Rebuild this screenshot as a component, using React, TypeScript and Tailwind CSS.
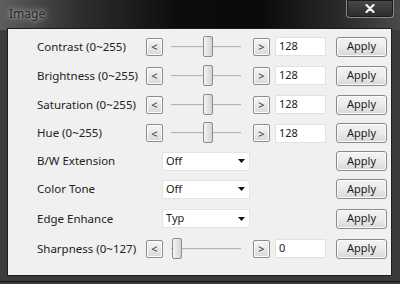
import React from "react";

const font = { fontFamily: '"Noto Sans", "DejaVu Sans", sans-serif' };

function SmallBtn({ ch }: { ch: string }) {
  return (
    <div className="w-[17px] h-[18px] border border-[#8c8c8c] rounded-[2px] bg-gradient-to-b from-[#f6f6f6] to-[#d9d9d9] flex items-center justify-center text-[11px] leading-none text-[#333] shadow-[inset_0_0_0_1px_#fcfcfc]">
      {ch}
    </div>
  );
}

function ApplyBtn() {
  return (
    <div className="w-[51px] h-[20px] border border-[#8a8a8a] rounded-[3px] bg-gradient-to-b from-[#f3f3f3] via-[#ebebeb] to-[#d6d6d6] flex items-center justify-center text-[11px] text-[#1a1a1a] shadow-[inset_0_0_0_1px_#fbfbfb]">
      Apply
    </div>
  );
}

function SliderRow({ label, value, max, h }: { label: string; value: number; max: number; h: number }) {
  const left = 9 + (value / max) * 61;
  return (
    <div className="flex items-center" style={{ height: h }}>
      <div className="w-[109px] text-[11.5px] text-[#222] whitespace-nowrap">{label}</div>
      <SmallBtn ch="<" />
      <div className="relative w-[90px] h-[22px]">
        <div className="absolute left-[8px] right-[12px] top-[10px] h-[2px] border-t border-[#b5b5b5] bg-[#e6e6e6]" />
        <div
          className="absolute top-[0px] w-[10px] h-[21px] border border-[#8c8c8c] rounded-[2px] bg-gradient-to-r from-[#f4f4f4] via-[#e3e3e3] to-[#d2d2d2]"
          style={{ left }}
        />
      </div>
      <SmallBtn ch=">" />
      <div className="ml-[5px] w-[51px] h-[19px] bg-white border border-[#e2e2e2] flex items-center pl-[3px] text-[11px] text-[#222]">
        {value}
      </div>
      <div className="ml-[10px]">
        <ApplyBtn />
      </div>
    </div>
  );
}

function SelectRow({ label, value, h }: { label: string; value: string; h: number }) {
  return (
    <div className="flex items-center" style={{ height: h }}>
      <div className="w-[109px] text-[11.5px] text-[#222] whitespace-nowrap">{label}</div>
      <div className="ml-[16px] w-[88px] h-[19px] bg-white border border-[#e4e4e4] flex items-center justify-between pl-[3px] pr-[4px] text-[11px] text-[#222]">
        <span>{value}</span>
        <svg width="7" height="4" viewBox="0 0 7 4">
          <path d="M0 0 H7 L3.5 4 Z" fill="#111" />
        </svg>
      </div>
      <div className="ml-[86px]">
        <ApplyBtn />
      </div>
    </div>
  );
}

export default function App() {
  return (
    <div
      className="w-[400px] h-[284px] relative overflow-hidden flex flex-col bg-[#3b3b3b]"
      style={font}
    >
      <div className="absolute inset-x-0 top-0 h-[30px] bg-[linear-gradient(90deg,#5e5e5e_0%,#2e2e2e_20%,#0c0c0c_45%,#0a0a0a_65%,#2a2a2a_85%,#4a4a4a_100%)]" />
      <div className="relative h-[28px] flex items-center pl-[9px]">
        <span className="text-[12px] text-[#262626] [text-shadow:0_0_3px_#a0a0a0,0_0_6px_#a0a0a0,0_0_10px_#8a8a8a]">Image</span>
        <div className="absolute right-[6px] top-0 w-[48px] h-[18px] rounded-b-[4px] border border-t-0 border-[#8a8a8a] bg-gradient-to-b from-[#4a4a4a] to-[#2c2c2c] flex items-center justify-center shadow-[inset_0_0_0_1px_#1a1a1a]">
          <svg width="10" height="9" viewBox="0 0 10 9">
            <path d="M1.5 1 L8.5 8 M8.5 1 L1.5 8" stroke="#f4f4f4" strokeWidth="2.2" strokeLinecap="round" />
          </svg>
        </div>
      </div>
      <div className="relative ml-[7px] w-[385px] h-[248px] border border-[#1c1c1c] bg-[#f0f0f0] pl-[29px] pt-[3px] flex flex-col">
        <SliderRow label="Contrast (0~255)" value={128} max={255} h={29} />
        <SliderRow label="Brightness (0~255)" value={128} max={255} h={29} />
        <SliderRow label="Saturation (0~255)" value={128} max={255} h={29} />
        <SliderRow label="Hue (0~255)" value={128} max={255} h={28} />
        <SelectRow label="B/W Extension" value="Off" h={28} />
        <SelectRow label="Color Tone" value="Off" h={28} />
        <SelectRow label="Edge Enhance" value="Typ" h={31} />
        <SliderRow label="Sharpness (0~127)" value={0} max={127} h={29} />
      </div>
      <div className="absolute left-0 right-0 bottom-[2px] h-[1px] bg-[#111]" />
    </div>
  );
}
